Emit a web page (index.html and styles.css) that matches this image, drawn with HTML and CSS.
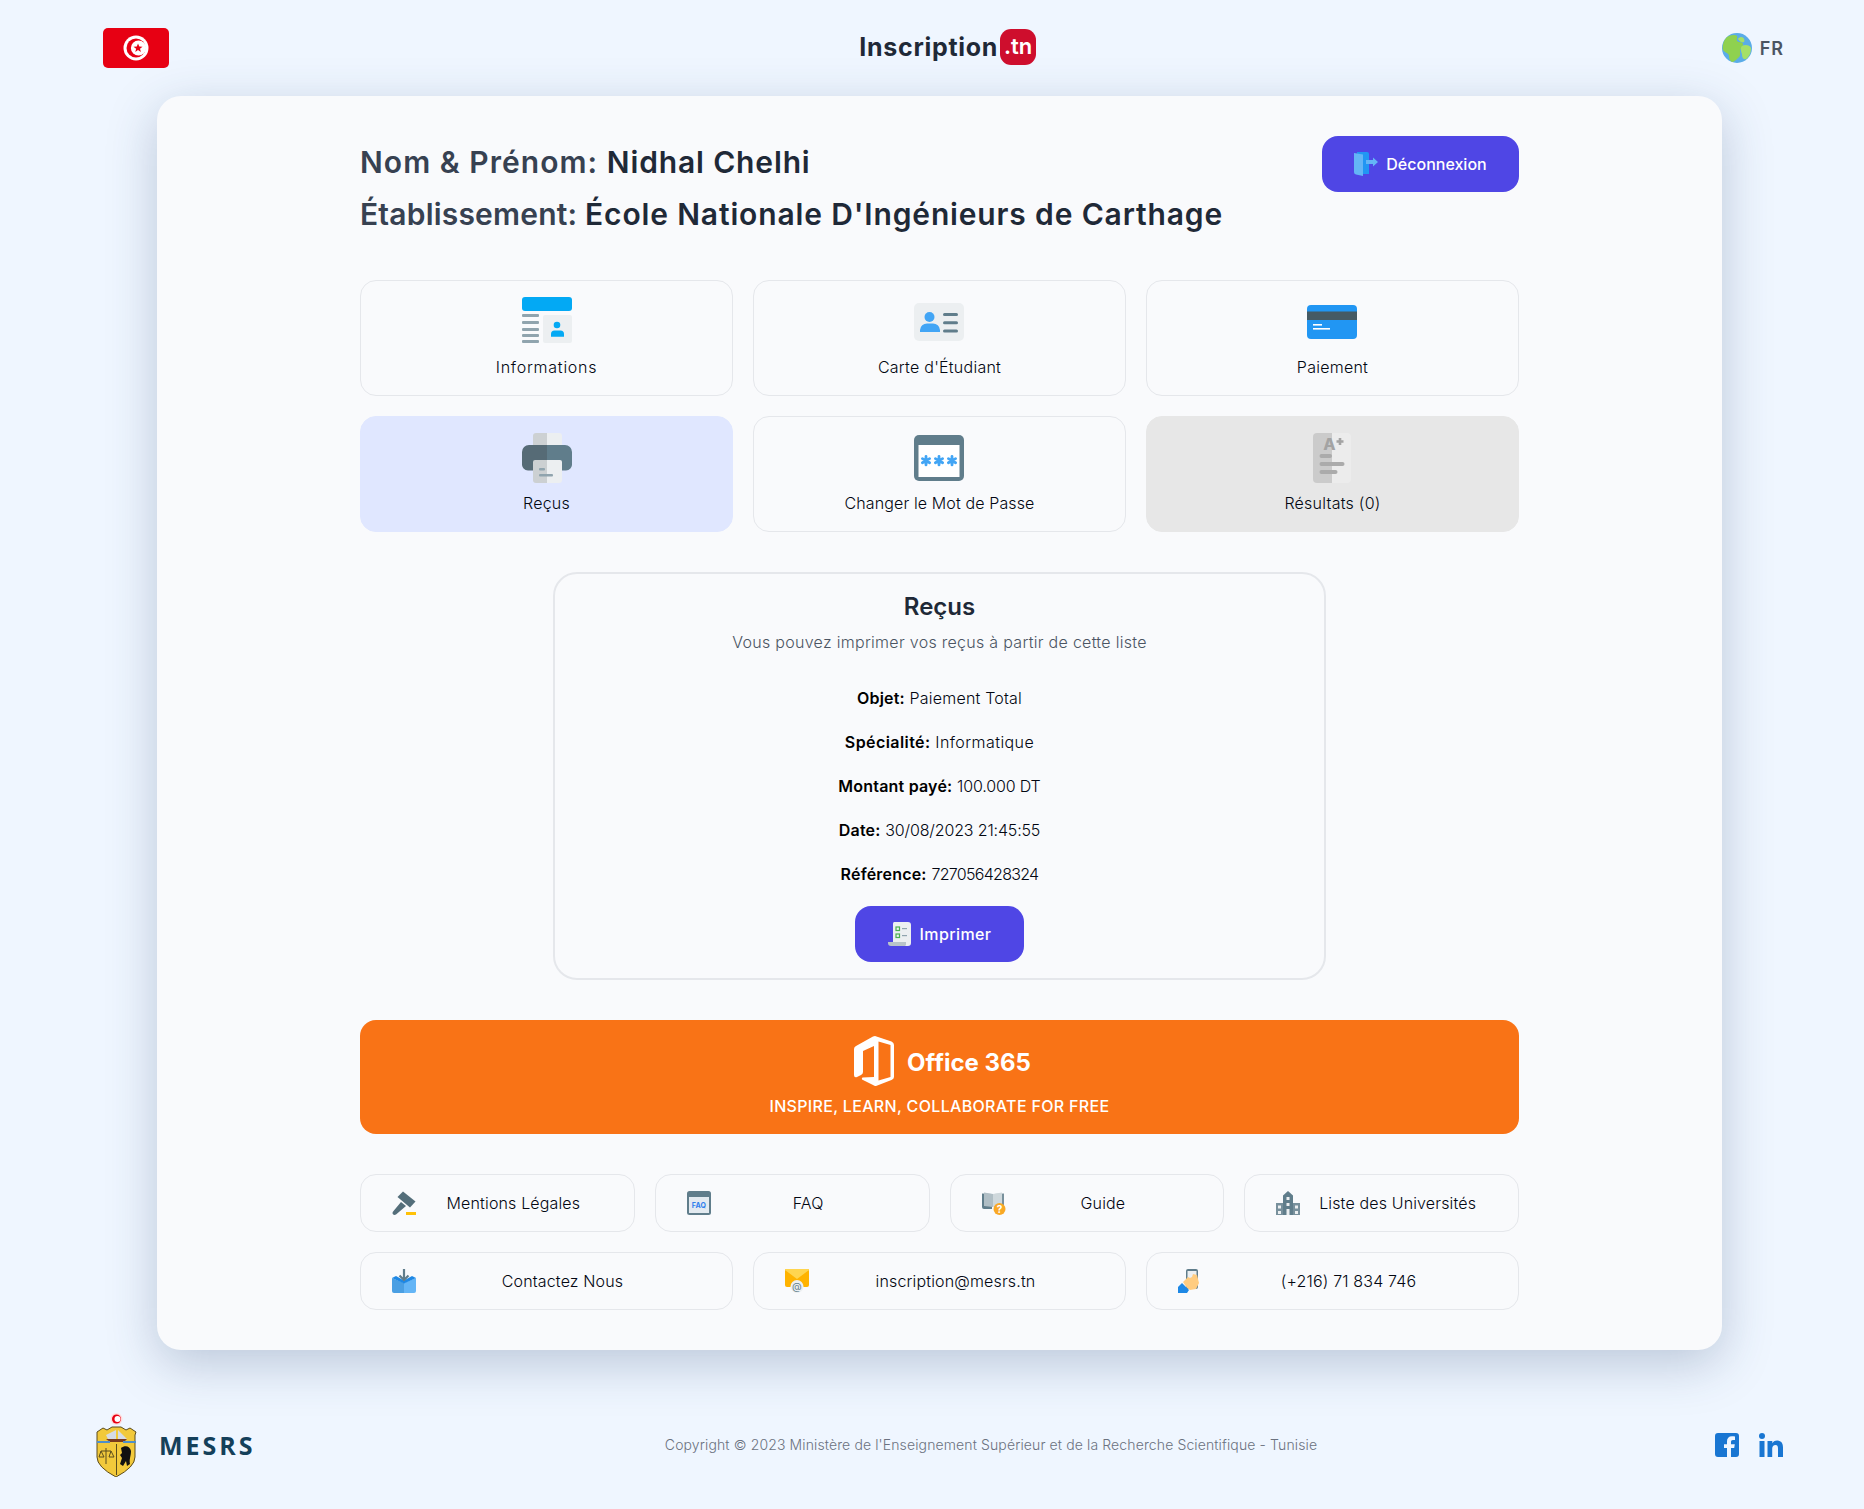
FILE: index.html
```html
<!DOCTYPE html>
<html lang="fr">
<head>
<meta charset="utf-8">
<title>Inscription.tn</title>
<link rel="stylesheet" href="styles.css">
</head>
<body>
<header class="topbar">
  <svg class="flag" viewBox="0 0 66 40"><rect width="66" height="40" rx="5" fill="#e70013"/><circle cx="33" cy="20" r="12.5" fill="#fff"/><circle cx="33" cy="20" r="9.5" fill="#e70013"/><circle cx="35.5" cy="20" r="7.6" fill="#fff"/><path d="M35 15.5l1.3 3 3.2.2-2.5 2 .9 3.2-2.9-1.8-2.7 1.9.8-3.2-2.6-2 3.3-.3z" fill="#e70013"/></svg>
  <div class="logo"><span class="logo-name">Inscription</span><span class="logo-tld">.tn</span></div>
  <div class="lang">
    <svg class="globe" viewBox="0 0 30 30"><circle cx="15" cy="15" r="15" fill="#5aace8"/><path d="M5 4c3-2 8-3 10-1 1 2-1 3 0 5 2 2 5 0 6 3 0 3-3 4-3 7 0 3 1 5-2 7-2 2-4 4-6 4-2-1-3-3-3-6 0-3-4-3-6-6-1-5 1-10 4-13z" fill="#8fd14f"/><path d="M19 4c3 0 4 3 3 5-2 1-5-1-6-3 0-1 2-2 3-2zM20 13c3-2 8-1 9 2 0 5-2 9-5 11-3 1-4-2-4-5-1-3-2-6 0-8z" fill="#a5e067"/></svg>
    <span class="lang-code">FR</span>
  </div>
</header>

<main class="card">
  <section class="identity">
    <div class="identity-text">
      <h2 class="identity-line line-name">Nom &amp; Prénom: <strong>Nidhal Chelhi</strong></h2>
      <h2 class="identity-line line-school">Établissement: <strong>École Nationale D'Ingénieurs de Carthage</strong></h2>
    </div>
    <a class="btn btn-logout">
      <svg class="btn-icon" viewBox="0 0 24 24"><path d="M3 0h10a2 2 0 0 1 2 2v20h-11z" fill="#2196f3"/><path d="M0 1l9 1.500v21.500l-7-1.500A2.500 2.500 0 0 1 0 20z" fill="#64b5f6"/><path d="M12 8h7V5.500l5 4.500-5 4.500V12h-7z" fill="#64b5f6"/></svg>
      Déconnexion
    </a>
  </section>

  <nav class="tiles">
    <a class="tile tile-wide">
      <svg class="tile-icon" viewBox="0 0 50 50"><rect width="50" height="14" rx="3" fill="#03a9f4"/><g fill="#90a4ae"><rect y="17" width="17" height="3" rx="1"/><rect y="24" width="17" height="3" rx="1"/><rect y="31" width="17" height="3" rx="1"/><rect y="37" width="17" height="3" rx="1"/><rect y="43" width="17" height="3" rx="1"/></g><rect x="21" y="18" width="29" height="28" rx="2" fill="#eceff1"/><circle cx="35" cy="28" r="3.300" fill="#03a9f4"/><path d="M29 37a3.500 3.500 0 0 1 3.500-3.500h6A3.500 3.500 0 0 1 42 37v2.700H29z" fill="#03a9f4"/></svg>
      <span>Informations</span>
    </a>
    <a class="tile">
      <svg class="tile-icon" viewBox="0 0 50 50"><rect y="6" width="50" height="38" rx="5" fill="#eceff1"/><circle cx="15.500" cy="20" r="5" fill="#42a5f5"/><path d="M6 33a7 7 0 0 1 7-6.500h6a7 7 0 0 1 7 6.500v2H6z" fill="#42a5f5"/><g fill="#607d8b"><rect x="29" y="16" width="15" height="3" rx="1.500"/><rect x="29" y="24.300" width="15" height="3" rx="1.500"/><rect x="29" y="32.500" width="15" height="3" rx="1.500"/></g></svg>
      <span>Carte d'Étudiant</span>
    </a>
    <a class="tile">
      <svg class="tile-icon" viewBox="0 0 50 50"><rect y="8" width="50" height="34" rx="4" fill="#2196f3"/><rect y="14.500" width="50" height="8.500" fill="#455a64"/><rect x="6" y="27" width="9" height="1.600" fill="#fff"/><rect x="6" y="31" width="17" height="1.600" fill="#fff"/></svg>
      <span>Paiement</span>
    </a>
    <a class="tile tile-active">
      <svg class="tile-icon" viewBox="0 0 50 50"><path d="M25 0h-11a3 3 0 0 0-3 3v11h14z" fill="#cdd1d3"/><path d="M25 0h12a3 3 0 0 1 3 3v11H25z" fill="#eceff1"/><path d="M25 12H7a7 7 0 0 0-7 7v12a6 6 0 0 0 6 6.500h19z" fill="#566b76"/><path d="M25 12h18a7 7 0 0 1 7 7v12a6 6 0 0 1-6 6.500H25z" fill="#607d8b"/><path d="M25 27H13a2 2 0 0 0-2 2v18a3 3 0 0 0 3 3h11z" fill="#ccd0d2"/><path d="M25 27h13a2 2 0 0 1 2 2v18a3 3 0 0 1-3 3H25z" fill="#eceff1"/><rect x="17" y="35" width="6" height="2.500" rx="1" fill="#90a4ae"/><rect x="17" y="41" width="14" height="2.500" rx="1" fill="#90a4ae"/></svg>
      <span>Reçus</span>
    </a>
    <a class="tile tile-tight">
      <svg class="tile-icon" viewBox="0 0 50 50"><rect y="2" width="50" height="46" rx="5" fill="#607d8b"/><rect x="4.500" y="12" width="41" height="32" fill="#fff"/><g stroke="#42a5f5" stroke-width="2.800" stroke-linecap="round"><path d="M12 23.500v8.400M8.400 25.600l7.200 4.200M15.600 25.600l-7.200 4.200"/><path d="M25 23.500v8.400M21.400 25.600l7.200 4.200M28.600 25.600l-7.200 4.200"/><path d="M38 23.500v8.400M34.400 25.600l7.200 4.200M41.600 25.600l-7.200 4.200"/></g></svg>
      <span>Changer le Mot de Passe</span>
    </a>
    <a class="tile tile-disabled">
      <svg class="tile-icon" viewBox="0 0 50 50"><path d="M25 0H10a4 4 0 0 0-4 4v42a4 4 0 0 0 4 4h15z" fill="#cbcbcb"/><path d="M25 0h15a4 4 0 0 1 4 4v42a4 4 0 0 1-4 4H25z" fill="#ececec"/><text class="grade" x="22.500" y="17">A</text><path d="M33 5v7M29.500 8.500h7" stroke="#a3a3a3" stroke-width="2.600"/><rect x="12.500" y="21" width="12.500" height="4" rx="2" fill="#ababab"/><rect x="12.500" y="29" width="25" height="4" rx="2" fill="#ababab"/><rect x="12.500" y="37" width="18" height="4" rx="2" fill="#ababab"/></svg>
      <span>Résultats (0)</span>
    </a>
  </nav>

  <section class="receipt">
    <h3 class="receipt-title">Reçus</h3>
    <p class="receipt-sub">Vous pouvez imprimer vos reçus à partir de cette liste</p>
    <p class="receipt-row"><b>Objet:</b> Paiement Total</p>
    <p class="receipt-row row-wide"><b>Spécialité:</b> Informatique</p>
    <p class="receipt-row"><b>Montant payé:</b> <span class="digits">100.000 DT</span></p>
    <p class="receipt-row"><b>Date:</b> <span class="digits">30/08/2023 21:45:55</span></p>
    <p class="receipt-row"><b>Référence:</b> <span class="digits-tight">727056428324</span></p>
    <a class="btn btn-print">
      <svg class="btn-icon" viewBox="0 0 24 24"><path d="M0 20h18v4H3a3 3 0 0 1-3-3z" fill="#b9c4c9"/><path d="M6 0h14a3 3 0 0 1 3 3v18a3 3 0 0 1-3 3h-3a2 2 0 0 0 1-2v-2H5V2a2 2 0 0 1 1-2z" fill="#eceff1"/><g fill="none" stroke="#4caf50" stroke-width="1.200"><rect x="8" y="5" width="3.500" height="3.500"/><rect x="8" y="12" width="3.500" height="3.500"/></g><g fill="#90a4ae"><rect x="14" y="6" width="5" height="1.200"/><rect x="14" y="13" width="5" height="1.200"/></g></svg>
      Imprimer
    </a>
  </section>

  <a class="banner">
    <div class="banner-head">
      <svg class="office" viewBox="0 0 40 50"><path fill-rule="evenodd" fill="#fff" d="M21 0l16.500 5.500Q40 6.500 40 9v32q0 2-2.500 3L22 50q-1 .3-2-.5L8 43.500q-.5-1 .5-2L20 41V10L9 15v21q0 2-2 3l-4 2q-3 1-3-2V13q0-2 2-3L19 .5q1-.5 2-.5zM24.500 5.500v39L36.500 41V9z"/></svg>
      <span class="banner-name">Office 365</span>
    </div>
    <div class="banner-tag">INSPIRE, LEARN, COLLABORATE FOR FREE</div>
  </a>

  <nav class="links links-four">
    <a class="link">
      <svg class="link-icon" viewBox="0 0 24 24"><g fill="#546e7a"><path d="M11 .5l12.500 10-5.500 6L5.500 6z"/><path d="M9 11l5 4-10 8.500q-2 1-3.200-.5Q0 21.500 1.500 20z"/></g><rect x="14" y="21" width="10" height="3" fill="#ffc107"/></svg>
      <span>Mentions Légales</span>
    </a>
    <a class="link">
      <svg class="link-icon" viewBox="0 0 24 24"><rect width="24" height="24" rx="2.500" fill="#607d8b"/><rect x="2" y="6" width="20" height="16" fill="#e3eaf0"/><text class="faq" x="12" y="17">FAQ</text></svg>
      <span>FAQ</span>
    </a>
    <a class="link">
      <svg class="link-icon" viewBox="0 0 24 24"><path d="M0 2.500l10 0.500v15H2a2 2 0 0 1-2-2z" fill="#607d8b"/><path d="M22 2.500l-10 0.500v15h8a2 2 0 0 0 2-2z" fill="#78909c"/><path d="M2 1.500l9 1.500v13l-9-1z" fill="#b0bec5"/><path d="M20 1.500l-9 1.500v13l9-1z" fill="#cfd8dc"/><circle cx="17.500" cy="18" r="6" fill="#f9a825"/><text class="mark" x="17.500" y="21.500">?</text></svg>
      <span>Guide</span>
    </a>
    <a class="link">
      <svg class="link-icon" viewBox="0 0 24 24"><path d="M12 0l5 4.500v19.500H7V4.500z" fill="#607d8b"/><rect y="12" width="7" height="12" fill="#78909c"/><rect x="17" y="12" width="7" height="12" fill="#78909c"/><g fill="#eceff1"><rect x="10.500" y="6" width="3" height="3"/><rect x="10.500" y="12" width="3" height="3"/><rect x="10.500" y="18" width="3" height="6"/><rect x="2" y="14.500" width="3" height="3"/><rect x="2" y="20" width="3" height="3"/><rect x="19" y="14.500" width="3" height="3"/><rect x="19" y="20" width="3" height="3"/></g></svg>
      <span>Liste des Universités</span>
    </a>
  </nav>

  <nav class="links links-three">
    <a class="link">
      <svg class="link-icon" viewBox="0 0 24 24"><path d="M0 9l12 5v10H2a2 2 0 0 1-2-2z" fill="#4a9fe3"/><path d="M24 9l-12 5v10h10a2 2 0 0 0 2-2z" fill="#64b5f6"/><path d="M0 9l4-2 8 4.500 8-4.500 4 2-12 5.500z" fill="#1e88e5"/><path d="M12 0v11M7.500 6.500l4.500 4.500 4.500-4.500" fill="none" stroke="#607d8b" stroke-width="2.200"/></svg>
      <span>Contactez Nous</span>
    </a>
    <a class="link">
      <svg class="link-icon" viewBox="0 0 24 24"><path d="M2 0h20a2 2 0 0 1 2 2v14a2 2 0 0 1-2 2H2a2 2 0 0 1-2-2V2a2 2 0 0 1 2-2z" fill="#ffb300"/><path d="M0 1l12 9 12-9v-1H0z" fill="#ffd54f"/><circle cx="12" cy="17.500" r="6.500" fill="#eceff1"/><text class="at" x="12" y="21">@</text></svg>
      <span>inscription@mesrs.tn</span>
    </a>
    <a class="link">
      <svg class="link-icon" viewBox="0 0 24 24"><rect x="8" y="0" width="12" height="20" rx="2" fill="#607d8b"/><rect x="9.500" y="2" width="9" height="15" fill="#eceff1"/><path d="M5 13l5-5 2 1 2-1 1-3 4 1 2 8-3 6-6 1-3-2z" fill="#ffcc80"/><path d="M0 18l4-4 7 7-2 3H0z" fill="#1e88e5"/></svg>
      <span>(+216) 71 834 746</span>
    </a>
  </nav>
</main>

<footer class="footer">
  <div class="ministry">
    <svg class="arms" viewBox="0 0 41 65"><circle cx="20.500" cy="7" r="6" fill="#fdd"/><circle cx="20.500" cy="7" r="4.500" fill="#e70013"/><circle cx="21.500" cy="7" r="3" fill="#fff"/><path d="M1 20l6-4 4 2 5-3h9l5 3 4-2 6 4-1 3v22q0 10-19 20Q1 55 1 45V23z" fill="#f2c93b" stroke="#5b4d1e"/><path d="M10 23l10-5v9h-8zM22 18l9 9h-9z" fill="#d5dbe6"/><path d="M10 27h21l-3 3H14z" fill="#7a3a1e"/><path d="M1 30h13M27 30h13" stroke="#4f8fc9" stroke-width="2"/><path d="M20.500 32v31" stroke="#5b4d1e"/><path d="M10 36v16M5 39h10M5 39l-2 6h5zM15 39l-2 6h5z" stroke="#5b4d1e" fill="none"/><path d="M25 36c4-3 9-2 10 3 0 5-2 8-1 13l-3 2-1-5-3 5-3-2 2-6-2-3 2-2z" fill="#111"/></svg>
    <span class="ministry-name">MESRS</span>
  </div>
  <p class="copyright">Copyright © 2023 Ministère de l'Enseignement Supérieur et de la Recherche Scientifique - Tunisie</p>
  <div class="socials">
    <svg class="social" viewBox="0 0 24 24"><path d="M3 0h18a3 3 0 0 1 3 3v18a3 3 0 0 1-3 3h-5v-9h3.200l.6-3.800H16V9c0-1.100.5-2 2-2h2V3.600C19 3.400 18 3.300 17 3.300c-3.300 0-5 2-5 5v2.900H9V15h3v9H3a3 3 0 0 1-3-3V3a3 3 0 0 1 3-3z" fill="#1976d2"/></svg>
    <svg class="social" viewBox="0 0 24 24"><rect x="0.500" y="8" width="5" height="16" fill="#1976d2"/><circle cx="3" cy="3" r="3" fill="#1976d2"/><path d="M8.500 8h4.800v2.200C14 9 15.700 7.600 18.300 7.600c4.500 0 5.700 3 5.700 7V24h-5v-8.300c0-2-.4-3.700-2.500-3.700s-3.300 1.500-3.300 3.700V24h-4.700z" fill="#1976d2"/></svg>
  </div>
</footer>
</body>
</html>
```

FILE: styles.css
```css
* { box-sizing: border-box; }
html, body { margin: 0; padding: 0; }
body {
  width: 1864px;
  height: 1509px;
  overflow: hidden;
  background: #eff6ff;
  color: #030712;
  font-family: "Inter", "Liberation Sans", sans-serif;
  font-weight: 350;
}
h2, h3, p { margin: 0; }
svg { display: block; flex: none; }

.topbar {
  height: 96px;
  padding: 28px 81px 0 103px;
  display: flex;
  justify-content: space-between;
  align-items: flex-start;
}
.flag { width: 66px; height: 40px; }
.logo { display: flex; align-items: center; gap: 2px; height: 36px; margin-top: 1px; margin-left: 5px; }
.logo-name { font-size: 25px; font-weight: 700; color: #1f2937; letter-spacing: .7px; }
.logo-tld {
  background: #ce0e2d;
  color: #fff;
  font-size: 22px;
  font-weight: 600;
  height: 36px;
  line-height: 35px;
  padding: 0 4px;
  border-radius: 11px;
}
.lang { display: flex; align-items: center; gap: 8px; margin-top: 5px; }
.globe { width: 30px; height: 30px; }
.lang-code { font-size: 18px; font-weight: 600; color: #4b5563; letter-spacing: 1px; margin-right: -1px; }

.card {
  margin: 0 142px 0 157px;
  height: 1254px;
  padding: 40px 203px;
  background: #f9fafc;
  border-radius: 24px;
  box-shadow: 0 14px 50px rgba(40, 65, 110, .26);
}
.identity { display: flex; justify-content: space-between; align-items: flex-start; margin-bottom: 40px; }
.identity-line { font-size: 30px; line-height: 52px; font-weight: 600; color: #374151; }
.identity-line strong { font-weight: 600; color: #1f2937; letter-spacing: .85px; }
.line-name { letter-spacing: 1.05px; }
.line-school { letter-spacing: .2px; }

.btn {
  display: flex;
  align-items: center;
  justify-content: center;
  gap: 8px;
  height: 56px;
  background: #4f46e5;
  border-radius: 16px;
  color: #fff;
  font-size: 16px;
  font-weight: 500;
}
.btn-logout { width: 197px; }
.btn-print { width: 169px; margin: 20px auto 0; letter-spacing: .4px; }
.btn-icon { width: 24px; height: 24px; }

.tiles { display: grid; grid-template-columns: repeat(3, 1fr); gap: 20px; }
.tile {
  height: 116px;
  padding-top: 16px;
  border: 1px solid #e5e7eb;
  border-radius: 16px;
  display: flex;
  flex-direction: column;
  align-items: center;
  font-size: 16px;
  line-height: 24px;
  letter-spacing: .25px;
}
.tile-wide { letter-spacing: .75px; }
.tile-tight { letter-spacing: .12px; }
.tile-icon { width: 50px; height: 50px; margin-bottom: 8px; }
.tile:not(:nth-child(3n+1)) .tile-icon { margin-right: 1px; }
.tile-active { background: #e0e7ff; border-color: #e0e7ff; }
.tile-disabled { background: #e7e7e7; border-color: #e7e7e7; }
.grade { font: 800 16px "Inter", sans-serif; fill: #a3a3a3; text-anchor: middle; }

.receipt {
  margin: 40px auto 0;
  width: 773px;
  height: 408px;
  padding: 17px 16px 16px;
  border: 2px solid #e5e7eb;
  border-radius: 24px;
  text-align: center;
}
.receipt-title { font-size: 24px; line-height: 32px; font-weight: 600; color: #1f2937; }
.receipt-sub { margin-top: 7px; margin-bottom: 32px; font-size: 16px; line-height: 24px; font-weight: 300; letter-spacing: .29px; color: #4b5563; }
.receipt-row { font-size: 16px; line-height: 24px; margin-bottom: 20px; letter-spacing: .2px; }
.row-wide { letter-spacing: .42px; }
.receipt-row:last-of-type { margin-bottom: 0; }
.receipt-row b { font-weight: 600; color: #000; }
.digits { letter-spacing: -.15px; }
.digits-tight { letter-spacing: -.7px; }

.banner {
  display: block;
  margin-top: 40px;
  height: 114px;
  padding-top: 16px;
  background: #f97316;
  border-radius: 16px;
  text-align: center;
  color: #fff;
}
.banner-head { display: flex; justify-content: center; align-items: center; gap: 13px; padding-left: 6px; }
.office { width: 40px; height: 50px; }
.banner-name { font-size: 24px; font-weight: 700; margin-top: 3px; }
.banner-tag { font-size: 16px; line-height: 24px; font-weight: 500; margin-top: 8px; letter-spacing: .33px; }

.links { display: grid; gap: 20px; margin-top: 20px; }
.links-four { grid-template-columns: repeat(4, 1fr); margin-top: 40px; }
.links-three { grid-template-columns: repeat(3, 1fr); }
.link {
  height: 58px;
  padding: 0 31px;
  border: 1px solid #e5e7eb;
  border-radius: 16px;
  display: flex;
  align-items: center;
  gap: 8px;
  font-size: 16px;
  letter-spacing: .15px;
}
.link span { flex: 1; text-align: center; white-space: nowrap; }
.link-icon { width: 24px; height: 24px; }
.faq { font: 700 7px "Inter", sans-serif; fill: #2f80ed; text-anchor: middle; }
.mark { font: 700 10px "Inter", sans-serif; fill: #fff; text-anchor: middle; }
.at { font: 400 10px "Inter", sans-serif; fill: #607d8b; text-anchor: middle; }

.footer {
  display: flex;
  justify-content: space-between;
  align-items: center;
  padding: 62px 81px 0 96px;
}
.ministry { display: flex; align-items: center; gap: 22px; width: 171px; }
.arms { width: 41px; height: 65px; }
.ministry-name { font-family: "Open Sans", sans-serif; font-size: 25px; font-weight: 700; letter-spacing: 3px; color: #14405a; }
.copyright { font-size: 14px; font-weight: 300; color: #6b7280; letter-spacing: .12px; }
.socials { display: flex; gap: 20px; }
.social { width: 24px; height: 24px; }
```
